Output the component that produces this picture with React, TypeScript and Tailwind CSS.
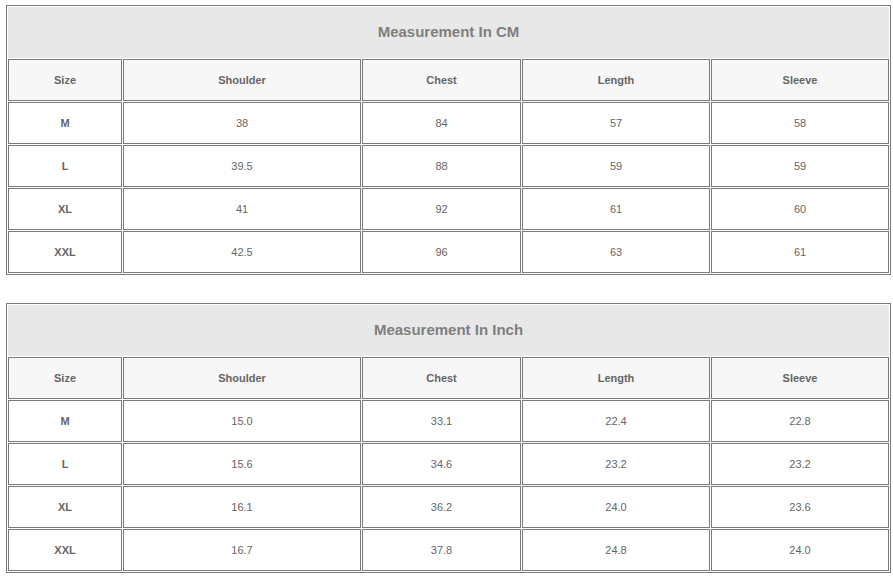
import React from "react";

const cols = ["Size", "Shoulder", "Chest", "Length", "Sleeve"];
const widths = ["w-[114px]", "w-[238px]", "w-[159px]", "w-[188px]", "w-[178px]"];

const cm = [
  ["M", "38", "84", "57", "58"],
  ["L", "39.5", "88", "59", "59"],
  ["XL", "41", "92", "61", "60"],
  ["XXL", "42.5", "96", "63", "61"],
];
const inch = [
  ["M", "15.0", "33.1", "22.4", "22.8"],
  ["L", "15.6", "34.6", "23.2", "23.2"],
  ["XL", "16.1", "36.2", "24.0", "23.6"],
  ["XXL", "16.7", "37.8", "24.8", "24.0"],
];

function SizeTable({ title, rows }: { title: string; rows: string[][] }) {
  return (
    <table className="table-fixed w-[885px] border-separate border-spacing-[1px] border border-[#7a7a7a]">
      <colgroup>
        {widths.map((w, i) => (
          <col key={i} className={w} />
        ))}
      </colgroup>
      <tbody>
        <tr>
          <td
            colSpan={5}
            className="h-[51px] border border-[#e8e8e8] bg-[#e8e8e8] text-center align-middle text-[15px] font-bold text-[#7f7f7f]"
          >
            {title}
          </td>
        </tr>
        <tr>
          {cols.map((c, i) => (
            <td
              key={i}
              className="h-[42px] border border-[#7a7a7a] bg-[#f7f7f7] text-center align-middle text-[11px] font-bold text-[#666666]"
            >
              {c}
            </td>
          ))}
        </tr>
        {rows.map((r, ri) => (
          <tr key={ri}>
            {r.map((v, i) => (
              <td
                key={i}
                className={
                  "h-[42px] border border-[#7a7a7a] bg-white text-center align-middle text-[11px] text-[#666666] " +
                  (i === 0 ? "font-bold" : "")
                }
              >
                {v}
              </td>
            ))}
          </tr>
        ))}
      </tbody>
    </table>
  );
}

export default function App() {
  return (
    <div
      className="w-[893px] h-[579px] bg-white pl-[6px] pt-[5px] flex flex-col gap-[28px]"
      style={{ fontFamily: '"Liberation Sans", Arial, sans-serif' }}
    >
      <SizeTable title="Measurement In CM" rows={cm} />
      <SizeTable title="Measurement In Inch" rows={inch} />
    </div>
  );
}
